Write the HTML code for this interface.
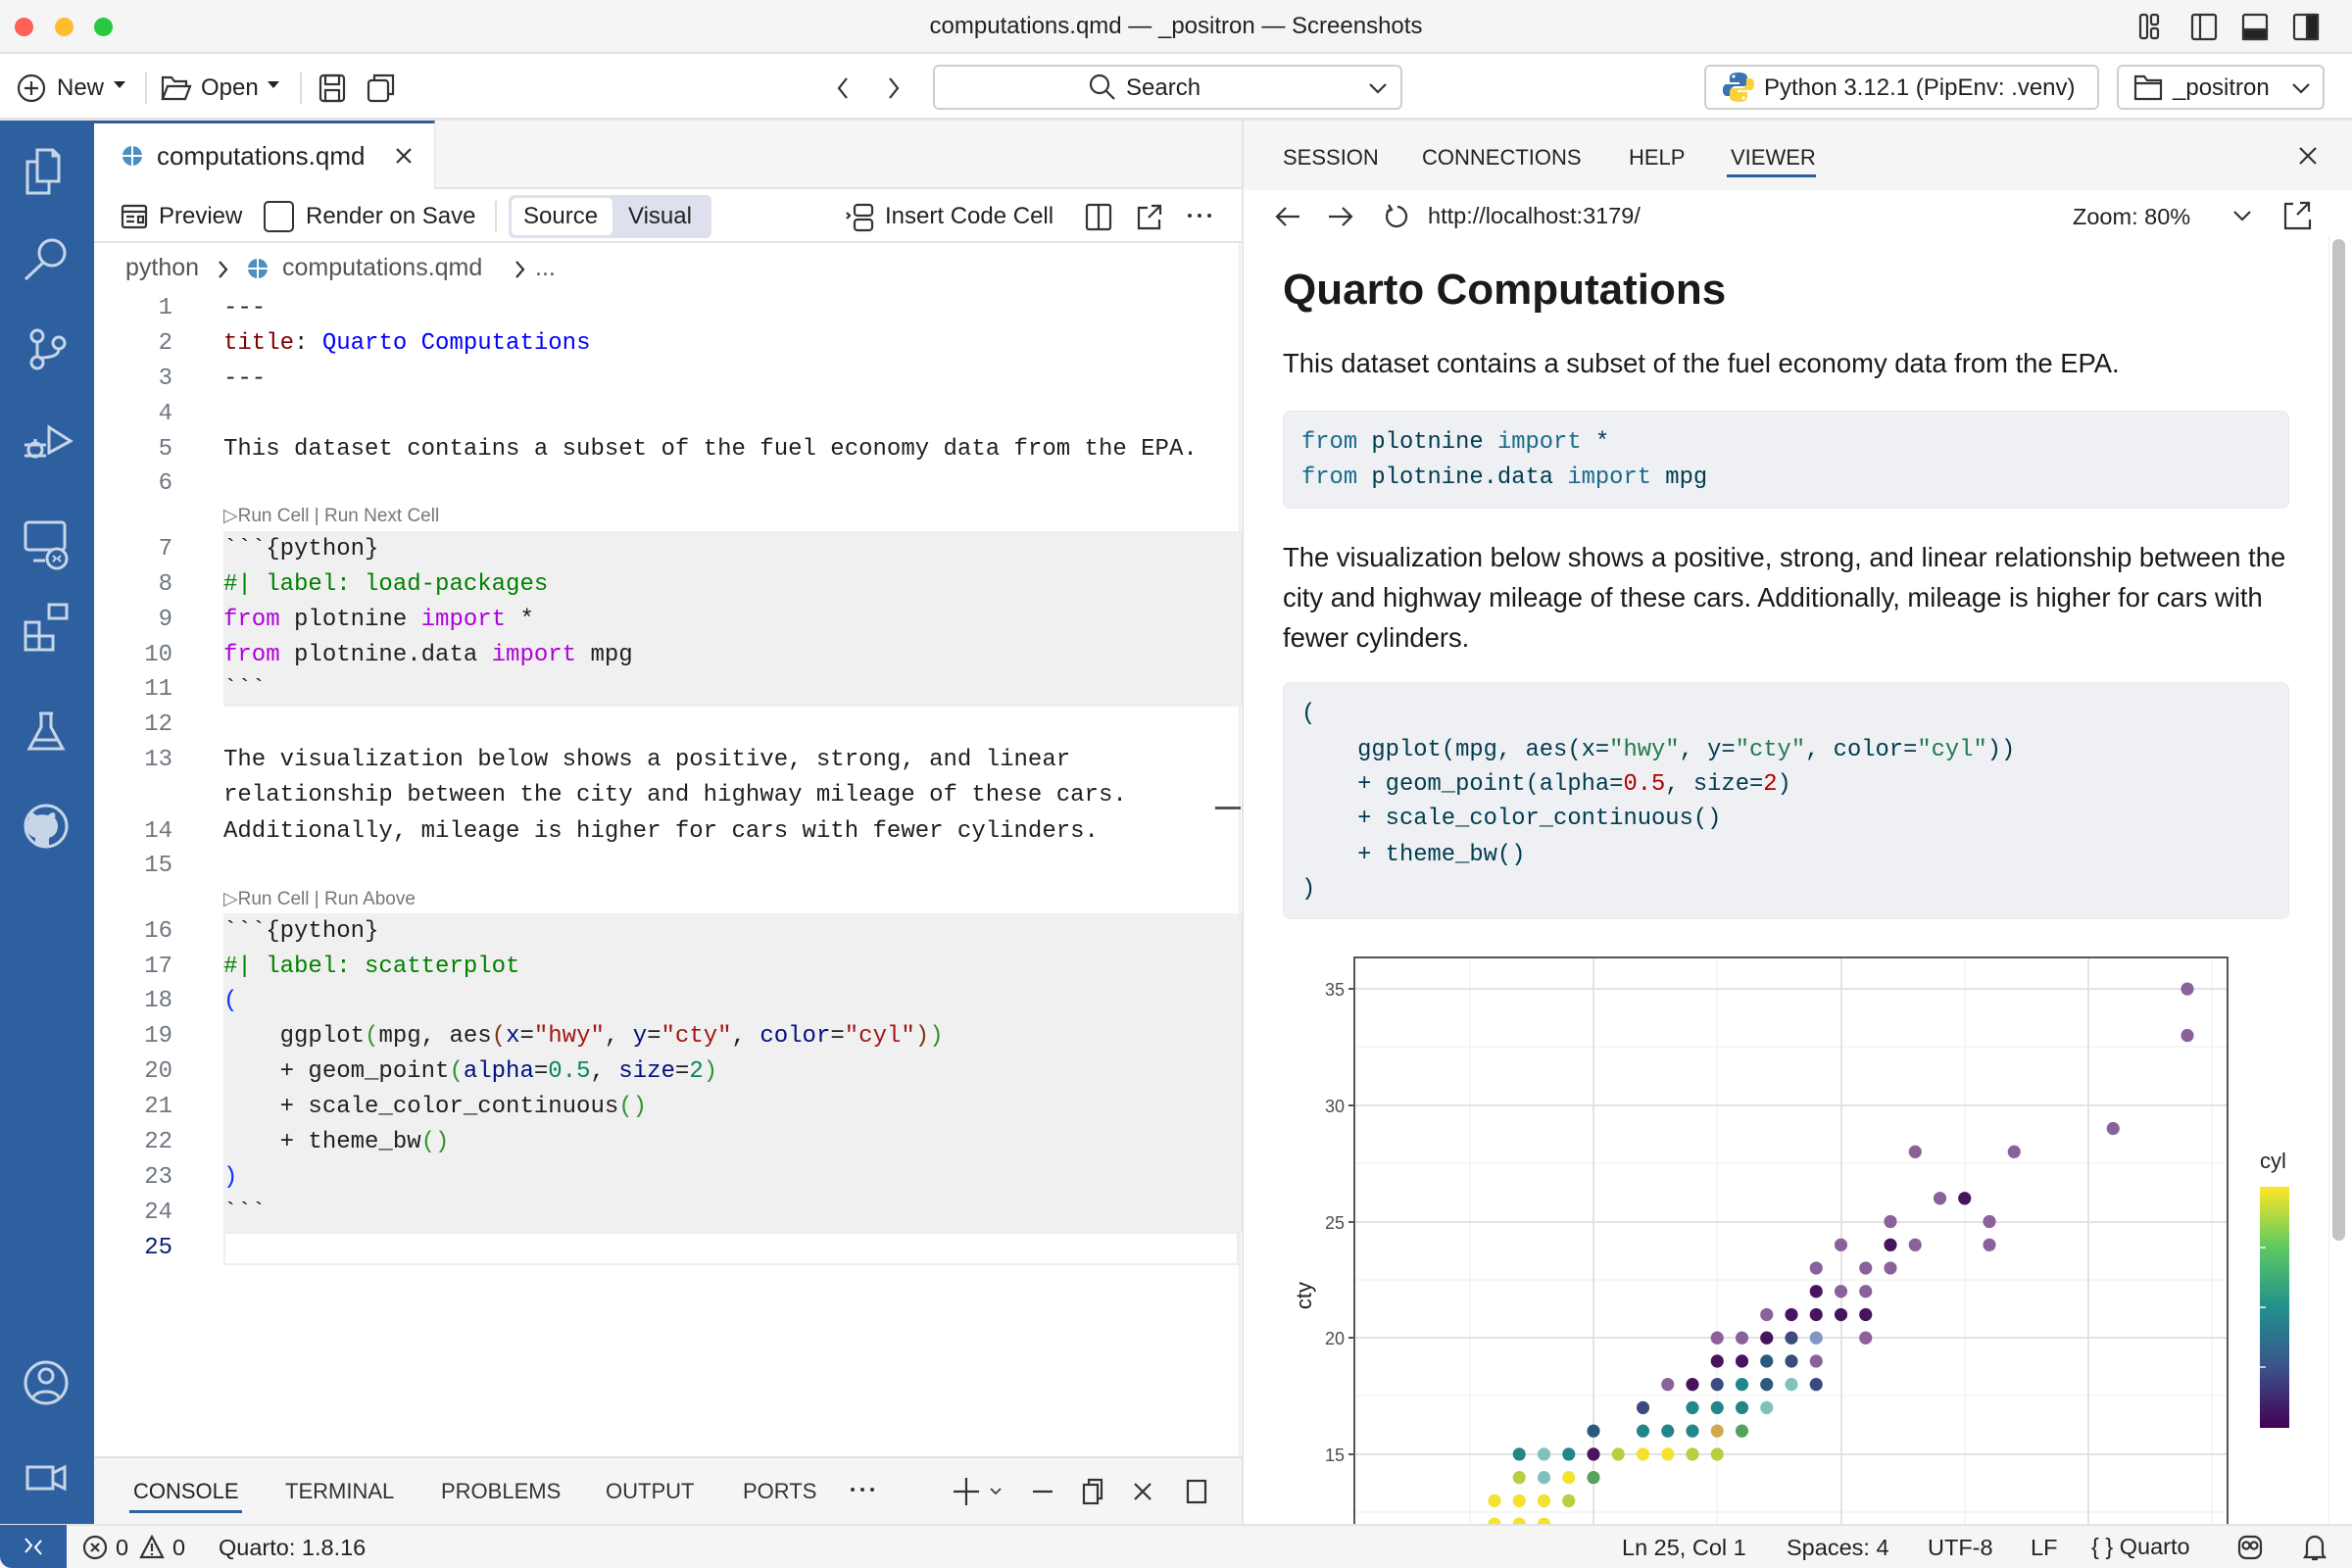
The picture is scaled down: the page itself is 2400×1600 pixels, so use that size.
<!DOCTYPE html>
<html><head><meta charset="utf-8"><style>
*{margin:0;padding:0;box-sizing:border-box}
body{width:2400px;height:1600px;overflow:hidden;background:#fff;font-family:"Liberation Sans",sans-serif;color:#333;position:relative}
.a{position:absolute;white-space:nowrap}
.ln{position:absolute;left:96px;width:80px;text-align:right;font-family:"Liberation Mono",monospace;font-size:24px;line-height:36px;color:#6e7681;margin-top:4px}
.cd{position:absolute;left:228px;font-family:"Liberation Mono",monospace;font-size:24px;line-height:36px;color:#1f1f1f;white-space:pre;margin-top:4px}
.lens{position:absolute;left:228px;font-size:19px;color:#777;line-height:30px;margin-top:4px}
.kw{color:#af00db}.gr{color:#008000}.b1{color:#0431fa}.b2{color:#319331}.b3{color:#7b3814}.st{color:#a31515}.nu{color:#098658}.pa{color:#001080}
.vc{position:absolute;left:1328px;font-family:"Liberation Mono",monospace;font-size:23.8px;line-height:36px;color:#003b4f;white-space:pre;margin-top:2px}
.vk{color:#1a6b8a}.vs{color:#20794d}.vn{color:#ad0000}
.ic{stroke:#c7d5e8;fill:none;stroke-width:3}
.tb{stroke:#333;fill:none;stroke-width:2.2}
</style></head><body>

<div class="a" style="left:0;top:0;width:2400px;height:55px;background:#f5f5f5;border-bottom:2px solid #e2e2e2"></div>
<div class="a" style="left:15px;top:18px;width:19px;height:19px;border-radius:50%;background:#fe5f57"></div>
<div class="a" style="left:56px;top:18px;width:19px;height:19px;border-radius:50%;background:#febc2e"></div>
<div class="a" style="left:96px;top:18px;width:19px;height:19px;border-radius:50%;background:#28c840"></div>
<div class="a" style="left:0;top:13px;width:2400px;text-align:center;font-size:24px;color:#222">computations.qmd — _positron — Screenshots</div>
<svg class="a" style="left:2180px;top:12px" width="200" height="32">
<g class="tb" stroke="#222"><rect x="4" y="3" width="7" height="24" rx="2"/><rect x="15" y="3" width="7" height="10" rx="2"/><rect x="15" y="17" width="7" height="10" rx="2"/>
<rect x="57" y="3" width="24" height="25" rx="2"/><line x1="65" y1="3" x2="65" y2="28"/>
<rect x="109" y="3" width="24" height="25" rx="2"/><rect x="109" y="18" width="24" height="10" fill="#222"/>
<rect x="161" y="3" width="24" height="25" rx="2"/><rect x="174" y="3" width="11" height="25" fill="#222"/></g></svg>

<div class="a" style="left:0;top:57px;width:2400px;height:66px;background:#fff;border-bottom:3px solid #e4e4e4"></div>
<svg class="a" style="left:16px;top:74px" width="32" height="32"><circle cx="16" cy="16" r="13" class="tb"/><path d="M16 9v14M9 16h14" class="tb"/></svg>
<div class="a" style="left:58px;top:76px;font-size:24px;color:#222">New</div>
<div class="a" style="left:116px;top:83px;border-left:6px solid transparent;border-right:6px solid transparent;border-top:7px solid #222"></div>
<div class="a" style="left:148px;top:74px;width:2px;height:32px;background:#ddd"></div>
<svg class="a" style="left:163px;top:74px" width="34" height="32"><path d="M3 27V5h9l3 4h12v5M3 27l5-13h23l-5 13z" class="tb"/></svg>
<div class="a" style="left:205px;top:76px;font-size:24px;color:#222">Open</div>
<div class="a" style="left:273px;top:83px;border-left:6px solid transparent;border-right:6px solid transparent;border-top:7px solid #222"></div>
<div class="a" style="left:306px;top:74px;width:2px;height:32px;background:#ddd"></div>
<svg class="a" style="left:323px;top:74px" width="32" height="32"><rect x="4" y="3" width="24" height="26" rx="3" class="tb"/><rect x="9" y="3" width="14" height="9" class="tb"/><rect x="9" y="18" width="14" height="11" class="tb"/></svg>
<svg class="a" style="left:373px;top:74px" width="32" height="32"><g class="tb" stroke="#aaa"><rect x="3" y="8" width="20" height="21" rx="3"/><path d="M9 8V3h19v19h-5"/></g></svg>
<svg class="a" style="left:848px;top:77px" width="80" height="26"><path d="M16 3L8 13l8 10" class="tb"/><path d="M60 3l8 10-8 10" class="tb" stroke="#999"/></svg>
<div class="a" style="left:952px;top:66px;width:479px;height:46px;border:2px solid #cfcfcf;border-radius:6px"></div>
<svg class="a" style="left:1110px;top:74px" width="30" height="30"><circle cx="12" cy="12" r="9" class="tb"/><path d="M18 18l9 9" class="tb"/></svg>
<div class="a" style="left:1149px;top:76px;font-size:24px;color:#222">Search</div>
<svg class="a" style="left:1396px;top:84px" width="20" height="14"><path d="M2 2l8 8 8-8" class="tb" stroke-width="2"/></svg>
<div class="a" style="left:1739px;top:66px;width:403px;height:46px;border:2px solid #cfcfcf;border-radius:6px"></div>
<svg class="a" style="left:1758px;top:72px" width="32" height="34"><path d="M16 2c-7 0-9 2-9 5v5h10v2H4c-3 0-4 3-4 6s1 6 4 6h4v-5c0-3 2-5 5-5h8c3 0 4-2 4-4V7c0-3-3-5-9-5z" fill="#3a73b0"/><path d="M16 32c7 0 9-2 9-5v-5H15v-2h13c3 0 4-3 4-6s-1-6-4-6h-4v5c0 3-2 5-5 5h-8c-3 0-4 2-4 4v5c0 3 3 5 9 5z" fill="#fcd23c"/><circle cx="11" cy="6" r="1.6" fill="#fff"/><circle cx="21" cy="28" r="1.6" fill="#fff"/></svg>
<div class="a" style="left:1800px;top:76px;font-size:24px;color:#222">Python 3.12.1 (PipEnv: .venv)</div>
<div class="a" style="left:2160px;top:66px;width:212px;height:46px;border:2px solid #cfcfcf;border-radius:6px"></div>
<svg class="a" style="left:2176px;top:74px" width="32" height="30"><path d="M3 4h9l3 4h14v19H3z M3 11h26" class="tb"/></svg>
<div class="a" style="left:2217px;top:76px;font-size:24px;color:#222">_positron</div>
<svg class="a" style="left:2338px;top:84px" width="20" height="14"><path d="M2 2l8 8 8-8" class="tb" stroke-width="2"/></svg>

<div class="a" style="left:0;top:123px;width:96px;height:1432px;background:#2e60a0"></div>
<svg class="a" style="left:0;top:123px" width="96" height="1432">
<g class="ic">
<path d="M38 30h16l6 6v26H38z M54 30v6h6 M38 42H28v32h22v-12"/>
<circle cx="53" cy="135" r="13"/><path d="M44 145l-18 17"/>
<circle cx="38" cy="220" r="6"/><circle cx="38" cy="247" r="6"/><circle cx="60" cy="227" r="6"/><path d="M38 226v15 M60 233c0 10-16 8-20 10"/>
<path d="M50 313l22 14-22 12z"/><circle cx="36" cy="336" r="7"/><path d="M25 331h22 M25 342h22 M36 329v-4"/>
<rect x="26" y="410" width="40" height="28" rx="3"/><path d="M34 449h12"/><circle cx="58" cy="447" r="10" fill="#2e60a0"/><path d="M54 444l3 3-3 3 M62 444l-3 3 3 3" stroke-width="2"/>
<path d="M26 512h14v14h14v14H26z M26 526h14v14 M50 508h18v-14H50z"/>
<path d="M40 605h14 M42 605v14l-12 22h34l-12-22v-14 M35 632h24"/>
<circle cx="47" cy="720" r="21"/>
<circle cx="47" cy="1288" r="21"/><circle cx="47" cy="1281" r="7"/><path d="M34 1303c3-8 23-8 26 0"/>
<path d="M28 1374h26v22H28z M54 1380l12-6v22l-12-6"/>
</g>
<path d="M36 740v-8c-6-2-9-6-9-12 0-3 1-6 3-8-1-3 0-5 1-6 3 0 5 2 6 3 4-1 8-1 12 0 1-1 3-3 6-3 1 1 2 3 1 6 2 2 3 5 3 8 0 6-3 10-9 12v8" fill="#c7d5e8"/>
</svg>

<div class="a" style="left:96px;top:123px;width:1171px;height:70px;background:#f5f5f5;border-bottom:2px solid #e4e4e4"></div>
<div class="a" style="left:96px;top:123px;width:348px;height:70px;background:#fff;border-top:3px solid #2e60a0;border-right:1px solid #e4e4e4"></div>
<svg class="a" style="left:124px;top:148px" width="22" height="22"><circle cx="11" cy="11" r="10" fill="#4a8fc0"/><path d="M11 1v20M1 11h20" stroke="#fff" stroke-width="2"/></svg>
<div class="a" style="left:160px;top:144px;font-size:26px;color:#222">computations.qmd</div>
<svg class="a" style="left:402px;top:149px" width="20" height="20"><path d="M3 3l14 14M17 3L3 17" class="tb"/></svg>

<div class="a" style="left:96px;top:194px;width:1171px;height:54px;background:#fff;border-bottom:2px solid #e4e4e4"></div>
<svg class="a" style="left:122px;top:207px" width="30" height="28"><rect x="3" y="3" width="24" height="22" rx="2" class="tb"/><path d="M3 9h24 M7 14h8 M7 19h8 M19 14h5v6h-5z" class="tb" stroke-width="1.8"/></svg>
<div class="a" style="left:162px;top:207px;font-size:24px;color:#222">Preview</div>
<div class="a" style="left:269px;top:205px;width:31px;height:32px;border:2.2px solid #333;border-radius:5px"></div>
<div class="a" style="left:312px;top:207px;font-size:24px;color:#222">Render on Save</div>
<div class="a" style="left:505px;top:205px;width:2px;height:32px;background:#ddd"></div>
<div class="a" style="left:519px;top:199px;width:207px;height:44px;background:#dee0ee;border-radius:6px"></div>
<div class="a" style="left:522px;top:202px;width:103px;height:38px;background:#fff;border-radius:5px"></div>
<div class="a" style="left:534px;top:207px;font-size:24px;color:#222">Source</div>
<div class="a" style="left:641px;top:207px;font-size:24px;color:#222">Visual</div>
<svg class="a" style="left:862px;top:206px" width="34" height="32"><path d="M2 11l3 3-3 3" class="tb" stroke-width="1.8"/><rect x="10" y="3" width="18" height="11" rx="3" class="tb"/><rect x="10" y="18" width="18" height="11" rx="3" class="tb"/></svg>
<div class="a" style="left:903px;top:207px;font-size:24px;color:#222">Insert Code Cell</div>
<svg class="a" style="left:1106px;top:206px" width="30" height="30"><rect x="3" y="3" width="24" height="25" rx="2" class="tb"/><path d="M15 3v25" class="tb"/></svg>
<svg class="a" style="left:1158px;top:206px" width="30" height="30"><path d="M13 6H4v21h21v-9 M17 4h9v9 M26 4L14 16" class="tb"/></svg>
<svg class="a" style="left:1210px;top:215px" width="30" height="10"><circle cx="4" cy="5" r="2" fill="#333"/><circle cx="14" cy="5" r="2" fill="#333"/><circle cx="24" cy="5" r="2" fill="#333"/></svg>

<div class="a" style="left:128px;top:259px;font-size:25px;color:#555">python</div>
<svg class="a" style="left:221px;top:264px" width="14" height="22"><path d="M3 3l7 8-7 8" class="tb" stroke="#666" stroke-width="1.8"/></svg>
<svg class="a" style="left:252px;top:263px" width="22" height="22"><circle cx="11" cy="11" r="10" fill="#4a8fc0"/><path d="M11 1v20M1 11h20" stroke="#fff" stroke-width="2"/></svg>
<div class="a" style="left:288px;top:259px;font-size:25px;color:#555">computations.qmd</div>
<svg class="a" style="left:524px;top:264px" width="14" height="22"><path d="M3 3l7 8-7 8" class="tb" stroke="#666" stroke-width="1.8"/></svg>
<div class="a" style="left:546px;top:259px;font-size:25px;color:#555">...</div>

<div class="a" style="left:228px;top:542px;width:1039px;height:179px;background:#f0f0f0"></div>
<div class="a" style="left:228px;top:932px;width:1039px;height:325px;background:#f0f0f0"></div>
<div class="a" style="left:228px;top:1257px;width:1036px;height:34px;border:2px solid #eee"></div>
<div class="a" style="left:1264px;top:248px;width:2px;height:1238px;background:#eee"></div>
<div class="a" style="left:1240px;top:823px;width:26px;height:3px;background:#555"></div>

<div class="ln" style="top:293px">1</div><div class="ln" style="top:329px">2</div><div class="ln" style="top:365px">3</div>
<div class="ln" style="top:401px">4</div><div class="ln" style="top:437px">5</div><div class="ln" style="top:472px">6</div>
<div class="ln" style="top:539px">7</div><div class="ln" style="top:575px">8</div><div class="ln" style="top:611px">9</div>
<div class="ln" style="top:647px">10</div><div class="ln" style="top:682px">11</div><div class="ln" style="top:718px">12</div>
<div class="ln" style="top:754px">13</div><div class="ln" style="top:827px">14</div><div class="ln" style="top:862px">15</div>
<div class="ln" style="top:929px">16</div><div class="ln" style="top:965px">17</div><div class="ln" style="top:1000px">18</div>
<div class="ln" style="top:1036px">19</div><div class="ln" style="top:1072px">20</div><div class="ln" style="top:1108px">21</div>
<div class="ln" style="top:1144px">22</div><div class="ln" style="top:1180px">23</div><div class="ln" style="top:1216px">24</div>
<div class="ln" style="top:1252px;color:#0b216f">25</div>

<div class="cd" style="top:293px">---</div>
<div class="cd" style="top:329px"><span style="color:#800000">title</span>: <span style="color:#0000ff">Quarto Computations</span></div>
<div class="cd" style="top:365px">---</div>
<div class="cd" style="top:437px">This dataset contains a subset of the fuel economy data from the EPA.</div>
<div class="lens" style="top:508px">▷Run Cell | Run Next Cell</div>
<div class="cd" style="top:539px">&#96;&#96;&#96;{python}</div>
<div class="cd gr" style="top:575px">#| label: load-packages</div>
<div class="cd" style="top:611px"><span class="kw">from</span> plotnine <span class="kw">import</span> *</div>
<div class="cd" style="top:647px"><span class="kw">from</span> plotnine.data <span class="kw">import</span> mpg</div>
<div class="cd" style="top:682px">&#96;&#96;&#96;</div>
<div class="cd" style="top:754px">The visualization below shows a positive, strong, and linear</div>
<div class="cd" style="top:790px">relationship between the city and highway mileage of these cars.</div>
<div class="cd" style="top:827px">Additionally, mileage is higher for cars with fewer cylinders.</div>
<div class="lens" style="top:899px">▷Run Cell | Run Above</div>
<div class="cd" style="top:929px">&#96;&#96;&#96;{python}</div>
<div class="cd gr" style="top:965px">#| label: scatterplot</div>
<div class="cd" style="top:1000px"><span class="b1">(</span></div>
<div class="cd" style="top:1036px">    ggplot<span class="b2">(</span>mpg, aes<span class="b3">(</span><span class="pa">x</span>=<span class="st">"hwy"</span>, <span class="pa">y</span>=<span class="st">"cty"</span>, <span class="pa">color</span>=<span class="st">"cyl"</span><span class="b3">)</span><span class="b2">)</span></div>
<div class="cd" style="top:1072px">    + geom_point<span class="b2">(</span><span class="pa">alpha</span>=<span class="nu">0.5</span>, <span class="pa">size</span>=<span class="nu">2</span><span class="b2">)</span></div>
<div class="cd" style="top:1108px">    + scale_color_continuous<span class="b2">()</span></div>
<div class="cd" style="top:1144px">    + theme_bw<span class="b2">()</span></div>
<div class="cd" style="top:1180px"><span class="b1">)</span></div>
<div class="cd" style="top:1216px">&#96;&#96;&#96;</div>

<div class="a" style="left:96px;top:1486px;width:1171px;height:69px;background:#f5f5f5;border-top:2px solid #e2e2e2"></div>
<div class="a" style="left:136px;top:1509px;font-size:22px;color:#222">CONSOLE</div>
<div class="a" style="left:132px;top:1541px;width:115px;height:3px;background:#2e60a0"></div>
<div class="a" style="left:291px;top:1509px;font-size:22px;color:#333">TERMINAL</div>
<div class="a" style="left:450px;top:1509px;font-size:22px;color:#333">PROBLEMS</div>
<div class="a" style="left:618px;top:1509px;font-size:22px;color:#333">OUTPUT</div>
<div class="a" style="left:758px;top:1509px;font-size:22px;color:#333">PORTS</div>
<svg class="a" style="left:866px;top:1515px" width="30" height="10"><circle cx="4" cy="5" r="2" fill="#333"/><circle cx="14" cy="5" r="2" fill="#333"/><circle cx="24" cy="5" r="2" fill="#333"/></svg>
<svg class="a" style="left:970px;top:1506px" width="270" height="32"><g class="tb"><path d="M16 2v28M3 16h26"/><path d="M41 13l5 5 5-5" stroke-width="1.6"/><path d="M84 16h20"/><rect x="136" y="9" width="14" height="19"/><path d="M141 9V4h13v19h-4"/><path d="M188 8l16 16M204 8l-16 16"/><rect x="242" y="5" width="18" height="22"/></g></svg>

<div class="a" style="left:1267px;top:123px;width:1133px;height:71px;background:#f5f5f5;border-left:2px solid #e4e4e4"></div>
<div class="a" style="left:1267px;top:194px;width:2px;height:1361px;background:#e4e4e4"></div>
<div class="a" style="left:1309px;top:148px;font-size:22px;color:#222">SESSION</div>
<div class="a" style="left:1451px;top:148px;font-size:22px;color:#222">CONNECTIONS</div>
<div class="a" style="left:1662px;top:148px;font-size:22px;color:#222">HELP</div>
<div class="a" style="left:1766px;top:148px;font-size:22px;color:#222">VIEWER</div>
<div class="a" style="left:1762px;top:178px;width:91px;height:3px;background:#2e60a0"></div>
<svg class="a" style="left:2344px;top:148px" width="22" height="22"><path d="M3 3l16 16M19 3L3 19" class="tb"/></svg>
<svg class="a" style="left:1300px;top:206px" width="150" height="30"><g class="tb"><path d="M26 15H4 M12 6l-9 9 9 9"/><path d="M56 15h22 M70 6l9 9-9 9"/><path d="M126 5a10 10 0 1 1-7 2 M117 3l3 5-5 2"/></g></svg>
<div class="a" style="left:1457px;top:207px;font-size:23.5px;color:#222">http://localhost:3179/</div>
<div class="a" style="left:2115px;top:208px;font-size:23.5px;color:#222">Zoom: 80%</div>
<svg class="a" style="left:2278px;top:214px" width="20" height="14"><path d="M2 2l8 8 8-8" class="tb" stroke-width="2"/></svg>
<svg class="a" style="left:2328px;top:204px" width="32" height="32"><path d="M12 4H4v25h25v-9 M19 3h9v9 M28 3L16 15" class="tb"/></svg>
<div class="a" style="left:2380px;top:244px;width:13px;height:1022px;background:#c3c3c3;border-radius:7px"></div>
<div class="a" style="left:2376px;top:240px;width:1px;height:1315px;background:#eee"></div>

<div class="a" style="left:1309px;top:271px;font-size:44px;font-weight:bold;color:#1a1a1a">Quarto Computations</div>
<div class="a" style="left:1309px;top:355px;font-size:27.4px;color:#1a1a1a">This dataset contains a subset of the fuel economy data from the EPA.</div>
<div class="a" style="left:1309px;top:419px;width:1027px;height:100px;background:#eef0f3;border-radius:8px;border:1px solid #e6e8ec"></div>
<div class="vc" style="top:432px"><span class="vk">from</span> plotnine <span class="vk">import</span> *</div>
<div class="vc" style="top:468px"><span class="vk">from</span> plotnine.data <span class="vk">import</span> mpg</div>
<div class="a" style="left:1309px;top:548px;font-size:27.4px;line-height:41px;color:#1a1a1a;white-space:normal;width:1030px">The visualization below shows a positive, strong, and linear relationship between the city and highway mileage of these cars. Additionally, mileage is higher for cars with fewer cylinders.</div>
<div class="a" style="left:1309px;top:696px;width:1027px;height:242px;background:#eef0f3;border-radius:8px;border:1px solid #e6e8ec"></div>
<div class="vc" style="top:709px">(</div>
<div class="vc" style="top:746px">    ggplot(mpg, aes(x=<span class="vs">"hwy"</span>, y=<span class="vs">"cty"</span>, color=<span class="vs">"cyl"</span>))</div>
<div class="vc" style="top:781px">    + geom_point(alpha=<span class="vn">0.5</span>, size=<span class="vn">2</span>)</div>
<div class="vc" style="top:816px">    + scale_color_continuous()</div>
<div class="vc" style="top:853px">    + theme_bw()</div>
<div class="vc" style="top:888px">)</div>

<svg class="a" style="left:0;top:0" width="2400" height="1555">
<defs><linearGradient id="vir" x1="0" y1="1" x2="0" y2="0">
<stop offset="0" stop-color="#440154"/><stop offset="0.25" stop-color="#3b528b"/><stop offset="0.5" stop-color="#21918c"/><stop offset="0.75" stop-color="#5ec962"/><stop offset="1" stop-color="#fde725"/></linearGradient></defs>
<g stroke="#f3f3f3" stroke-width="1.5">
<line x1="1382" x2="2273" y1="1068" y2="1068"/><line x1="1382" x2="2273" y1="1187" y2="1187"/><line x1="1382" x2="2273" y1="1306" y2="1306"/><line x1="1382" x2="2273" y1="1424" y2="1424"/><line x1="1382" x2="2273" y1="1543" y2="1543"/>
<line x1="1500" x2="1500" y1="977" y2="1555"/><line x1="1752" x2="1752" y1="977" y2="1555"/><line x1="2005" x2="2005" y1="977" y2="1555"/><line x1="2257" x2="2257" y1="977" y2="1555"/>
</g>
<g stroke="#e3e3e3" stroke-width="2">
<line x1="1382" x2="2273" y1="1009" y2="1009"/><line x1="1382" x2="2273" y1="1128" y2="1128"/><line x1="1382" x2="2273" y1="1247" y2="1247"/><line x1="1382" x2="2273" y1="1365" y2="1365"/><line x1="1382" x2="2273" y1="1484" y2="1484"/>
<line x1="1626" x2="1626" y1="977" y2="1555"/><line x1="1879" x2="1879" y1="977" y2="1555"/><line x1="2131" x2="2131" y1="977" y2="1555"/>
</g>
<rect x="1382" y="977" width="891" height="600" fill="none" stroke="#555" stroke-width="2"/>
<g stroke="#555" stroke-width="2"><line x1="1376" x2="1382" y1="1009" y2="1009"/><line x1="1376" x2="1382" y1="1128" y2="1128"/><line x1="1376" x2="1382" y1="1247" y2="1247"/><line x1="1376" x2="1382" y1="1365" y2="1365"/><line x1="1376" x2="1382" y1="1484" y2="1484"/></g>
<g font-family="Liberation Sans" font-size="18" fill="#4d4d4d" text-anchor="end">
<text x="1372" y="1016">35</text><text x="1372" y="1135">30</text><text x="1372" y="1254">25</text><text x="1372" y="1372">20</text><text x="1372" y="1491">15</text></g>
<text x="1338" y="1322" font-family="Liberation Sans" font-size="22" fill="#222" transform="rotate(-90 1338 1322)" text-anchor="middle">cty</text>
<text x="2306" y="1192" font-family="Liberation Sans" font-size="22" fill="#222">cyl</text>
<rect x="2306" y="1211" width="30" height="246" fill="url(#vir)"/>
<g stroke="#fff" stroke-width="2" opacity=".7"><line x1="2306" x2="2312" y1="1273" y2="1273"/><line x1="2306" x2="2312" y1="1334" y2="1334"/><line x1="2306" x2="2312" y1="1395" y2="1395"/></g>
<g transform="translate(1121,1840) scale(25.25,-23.74)">
<g fill="#8b619b">
<ellipse cx="44" cy="35" rx=".26" ry=".28"/><ellipse cx="44" cy="33" rx=".26" ry=".28"/><ellipse cx="41" cy="29" rx=".26" ry=".28"/><ellipse cx="33" cy="28" rx=".26" ry=".28"/><ellipse cx="37" cy="28" rx=".26" ry=".28"/><ellipse cx="34" cy="26" rx=".26" ry=".28"/><ellipse cx="32" cy="25" rx=".26" ry=".28"/><ellipse cx="36" cy="25" rx=".26" ry=".28"/><ellipse cx="30" cy="24" rx=".26" ry=".28"/><ellipse cx="33" cy="24" rx=".26" ry=".28"/><ellipse cx="36" cy="24" rx=".26" ry=".28"/><ellipse cx="29" cy="23" rx=".26" ry=".28"/><ellipse cx="31" cy="23" rx=".26" ry=".28"/><ellipse cx="32" cy="23" rx=".26" ry=".28"/><ellipse cx="30" cy="22" rx=".26" ry=".28"/><ellipse cx="31" cy="22" rx=".26" ry=".28"/><ellipse cx="27" cy="21" rx=".26" ry=".28"/><ellipse cx="25" cy="20" rx=".26" ry=".28"/><ellipse cx="26" cy="20" rx=".26" ry=".28"/><ellipse cx="31" cy="20" rx=".26" ry=".28"/><ellipse cx="29" cy="19" rx=".26" ry=".28"/><ellipse cx="23" cy="18" rx=".26" ry=".28"/></g>
<g fill="#47145e">
<ellipse cx="35" cy="26" rx=".26" ry=".28"/><ellipse cx="32" cy="24" rx=".26" ry=".28"/><ellipse cx="29" cy="22" rx=".26" ry=".28"/><ellipse cx="28" cy="21" rx=".26" ry=".28"/><ellipse cx="29" cy="21" rx=".26" ry=".28"/><ellipse cx="30" cy="21" rx=".26" ry=".28"/><ellipse cx="31" cy="21" rx=".26" ry=".28"/><ellipse cx="27" cy="20" rx=".26" ry=".28"/><ellipse cx="25" cy="19" rx=".26" ry=".28"/><ellipse cx="26" cy="19" rx=".26" ry=".28"/><ellipse cx="24" cy="18" rx=".26" ry=".28"/><ellipse cx="20" cy="15" rx=".26" ry=".28"/></g>
<g fill="#3b4a7f">
<ellipse cx="28" cy="20" rx=".26" ry=".28"/><ellipse cx="28" cy="19" rx=".26" ry=".28"/><ellipse cx="25" cy="18" rx=".26" ry=".28"/><ellipse cx="29" cy="18" rx=".26" ry=".28"/><ellipse cx="22" cy="17" rx=".26" ry=".28"/></g>
<g fill="#2d5a7c"><ellipse cx="27" cy="19" rx=".26" ry=".28"/><ellipse cx="20" cy="16" rx=".26" ry=".28"/><ellipse cx="27" cy="18" rx=".26" ry=".28"/></g>
<ellipse cx="29" cy="20" rx=".26" ry=".28" fill="#8098c2"/>
<g fill="#22878a">
<ellipse cx="26" cy="18" rx=".26" ry=".28"/><ellipse cx="24" cy="17" rx=".26" ry=".28"/><ellipse cx="25" cy="17" rx=".26" ry=".28"/><ellipse cx="26" cy="17" rx=".26" ry=".28"/><ellipse cx="22" cy="16" rx=".26" ry=".28"/><ellipse cx="23" cy="16" rx=".26" ry=".28"/><ellipse cx="24" cy="16" rx=".26" ry=".28"/><ellipse cx="17" cy="15" rx=".26" ry=".28"/><ellipse cx="19" cy="15" rx=".26" ry=".28"/></g>
<g fill="#80c1bf"><ellipse cx="28" cy="18" rx=".26" ry=".28"/><ellipse cx="27" cy="17" rx=".26" ry=".28"/><ellipse cx="18" cy="15" rx=".26" ry=".28"/><ellipse cx="18" cy="14" rx=".26" ry=".28"/></g>
<ellipse cx="25" cy="16" rx=".26" ry=".28" fill="#d0ab4e"/>
<g fill="#55a35a"><ellipse cx="26" cy="16" rx=".26" ry=".28"/><ellipse cx="20" cy="14" rx=".26" ry=".28"/></g>
<g fill="#b7cf3e"><ellipse cx="21" cy="15" rx=".26" ry=".28"/><ellipse cx="24" cy="15" rx=".26" ry=".28"/><ellipse cx="25" cy="15" rx=".26" ry=".28"/><ellipse cx="17" cy="14" rx=".26" ry=".28"/><ellipse cx="19" cy="13" rx=".26" ry=".28"/></g>
<g fill="#f5e22e"><ellipse cx="22" cy="15" rx=".26" ry=".28"/><ellipse cx="23" cy="15" rx=".26" ry=".28"/><ellipse cx="19" cy="14" rx=".26" ry=".28"/><ellipse cx="16" cy="13" rx=".26" ry=".28"/><ellipse cx="17" cy="13" rx=".26" ry=".28"/><ellipse cx="18" cy="13" rx=".26" ry=".28"/><ellipse cx="16" cy="12" rx=".26" ry=".28"/><ellipse cx="17" cy="12" rx=".26" ry=".28"/><ellipse cx="18" cy="12" rx=".26" ry=".28"/></g>
</g>
</svg>

<div class="a" style="left:0;top:1555px;width:2400px;height:45px;background:#f5f5f5;border-top:2px solid #e2e2e2"></div>
<div class="a" style="left:0;top:1556px;width:68px;height:44px;background:#2e60a0;border-bottom-left-radius:12px"></div>
<svg class="a" style="left:20px;top:1564px" width="28" height="28"><path d="M6 6l6 7-6 7 M22 8l-6 7 6 7" stroke="#fff" stroke-width="2" fill="none"/></svg>
<svg class="a" style="left:84px;top:1566px" width="110" height="26"><circle cx="13" cy="13" r="11" class="tb" stroke-width="1.8"/><path d="M9 9l8 8M17 9l-8 8" class="tb" stroke-width="1.8"/><path d="M71 2l11 21H60z M71 9v8 M71 19v2" class="tb" stroke-width="1.8"/></svg>
<div class="a" style="left:118px;top:1566px;font-size:23.5px;color:#222">0</div>
<div class="a" style="left:176px;top:1566px;font-size:23.5px;color:#222">0</div>
<div class="a" style="left:223px;top:1566px;font-size:23.5px;color:#222">Quarto: 1.8.16</div>
<div class="a" style="left:1655px;top:1566px;font-size:23.5px;color:#222">Ln 25, Col 1</div>
<div class="a" style="left:1823px;top:1566px;font-size:23.5px;color:#222">Spaces: 4</div>
<div class="a" style="left:1967px;top:1566px;font-size:23.5px;color:#222">UTF-8</div>
<div class="a" style="left:2072px;top:1566px;font-size:23.5px;color:#222">LF</div>
<div class="a" style="left:2134px;top:1565px;font-size:23.5px;color:#222">{ }&nbsp;Quarto</div>
<svg class="a" style="left:2282px;top:1564px" width="100" height="30"><rect x="3" y="4" width="22" height="22" rx="7" class="tb" stroke-width="2"/><circle cx="10" cy="13" r="3.5" class="tb" stroke-width="1.6"/><circle cx="18" cy="13" r="3.5" class="tb" stroke-width="1.6"/><path d="M72 22V12a8 8 0 0 1 16 0v10l2 3H70z M77 27h6" class="tb" stroke-width="2"/></svg>
</body></html>
